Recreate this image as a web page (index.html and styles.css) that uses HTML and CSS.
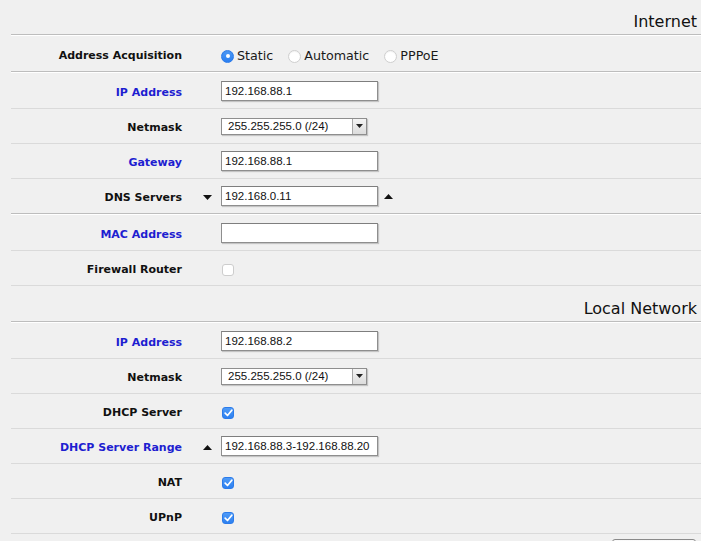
FILE: index.html
```html
<!DOCTYPE html>
<html>
<head>
<meta charset="utf-8">
<link rel="stylesheet" href="styles.css">
</head>
<body>
<div class="panel">
  <div class="heading end">Internet</div>

  <div class="row tall end">
    <div class="label">Address Acquisition</div>
    <div class="arrow-cell"></div>
    <div class="ctrl radios">
      <label class="radio-opt"><span class="radio on"></span>Static</label>
      <label class="radio-opt"><span class="radio"></span>Automatic</label>
      <label class="radio-opt"><span class="radio"></span>PPPoE</label>
    </div>
  </div>

  <div class="row tall">
    <div class="label blue">IP Address</div>
    <div class="arrow-cell"></div>
    <div class="ctrl"><div class="input">192.168.88.1</div></div>
  </div>

  <div class="row">
    <div class="label">Netmask</div>
    <div class="arrow-cell"></div>
    <div class="ctrl"><div class="select"><span class="sel-value">255.255.255.0 (/24)</span><span class="sel-btn"><svg width="7" height="4" viewBox="0 0 7 4"><polygon points="0,0 7,0 3.5,4" fill="#222"/></svg></span></div></div>
  </div>

  <div class="row">
    <div class="label blue">Gateway</div>
    <div class="arrow-cell"></div>
    <div class="ctrl"><div class="input">192.168.88.1</div></div>
  </div>

  <div class="row end">
    <div class="label">DNS Servers</div>
    <div class="arrow-cell"><svg class="tri" width="9" height="5" viewBox="0 0 9 5"><polygon points="0,0 9,0 4.5,5" fill="#111"/></svg></div>
    <div class="ctrl"><div class="input">192.168.0.11</div><svg class="tri" width="9" height="5" viewBox="0 0 9 5"><polygon points="0,5 9,5 4.5,0" fill="#111"/></svg></div>
  </div>

  <div class="row tall">
    <div class="label blue">MAC Address</div>
    <div class="arrow-cell"></div>
    <div class="ctrl"><div class="input"></div></div>
  </div>

  <div class="row">
    <div class="label">Firewall Router</div>
    <div class="arrow-cell"></div>
    <div class="ctrl"><span class="check"></span></div>
  </div>

  <div class="heading tall end">Local Network</div>

  <div class="row tall">
    <div class="label blue">IP Address</div>
    <div class="arrow-cell"></div>
    <div class="ctrl"><div class="input">192.168.88.2</div></div>
  </div>

  <div class="row">
    <div class="label">Netmask</div>
    <div class="arrow-cell"></div>
    <div class="ctrl"><div class="select"><span class="sel-value">255.255.255.0 (/24)</span><span class="sel-btn"><svg width="7" height="4" viewBox="0 0 7 4"><polygon points="0,0 7,0 3.5,4" fill="#222"/></svg></span></div></div>
  </div>

  <div class="row">
    <div class="label">DHCP Server</div>
    <div class="arrow-cell"></div>
    <div class="ctrl"><span class="check on"><svg width="9" height="8" viewBox="0 0 9 8"><polyline points="1.2,4.2 3.5,6.5 7.8,1.2" fill="none" stroke="#fff" stroke-width="1.7" stroke-linecap="round" stroke-linejoin="round"/></svg></span></div>
  </div>

  <div class="row">
    <div class="label blue">DHCP Server Range</div>
    <div class="arrow-cell"><svg class="tri" width="9" height="5" viewBox="0 0 9 5"><polygon points="0,5 9,5 4.5,0" fill="#111"/></svg></div>
    <div class="ctrl"><div class="input">192.168.88.3-192.168.88.20</div></div>
  </div>

  <div class="row">
    <div class="label">NAT</div>
    <div class="arrow-cell"></div>
    <div class="ctrl"><span class="check on"><svg width="9" height="8" viewBox="0 0 9 8"><polyline points="1.2,4.2 3.5,6.5 7.8,1.2" fill="none" stroke="#fff" stroke-width="1.7" stroke-linecap="round" stroke-linejoin="round"/></svg></span></div>
  </div>

  <div class="row">
    <div class="label">UPnP</div>
    <div class="arrow-cell"></div>
    <div class="ctrl"><span class="check on"><svg width="9" height="8" viewBox="0 0 9 8"><polyline points="1.2,4.2 3.5,6.5 7.8,1.2" fill="none" stroke="#fff" stroke-width="1.7" stroke-linecap="round" stroke-linejoin="round"/></svg></span></div>
  </div>

  <div class="footer"><button class="apply" aria-label="Apply"></button></div>
</div>
</body>
</html>
```

FILE: styles.css
```css
html, body {
  margin: 0;
  padding: 0;
  background: #f0f0f0;
}

body {
  font-family: "DejaVu Sans", Verdana, sans-serif;
  color: #111;
  overflow: hidden;
}

.panel {
  margin-left: 11px;
}

.heading {
  height: 34px;
  display: flex;
  flex-direction: column;
  align-items: flex-end;
  justify-content: flex-end;
  padding-right: 4px;
  font-size: 16px;
  line-height: 19px;
  color: #111;
  border-bottom: 1px solid #dadada;
}

.heading::after {
  content: "";
  display: block;
  height: 3px;
}

.heading.tall::after {
  height: 3px;
}

.row {
  height: 34px;
  display: grid;
  grid-template-columns: 171px 39px 1fr;
  align-items: center;
  border-bottom: 1px solid #dadada;
}

.tall {
  height: 35px;
}

.end {
  border-bottom-color: #bdbdbd;
  box-shadow: 0 1px 0 #ffffff;
  margin-bottom: 1px;
}

.label {
  text-align: right;
  font-weight: bold;
  font-size: 11px;
  color: #111;
  padding-top: 3px;
  white-space: nowrap;
}

.label.blue {
  color: #1e1ed0;
}

.arrow-cell {
  display: flex;
  justify-content: flex-end;
  padding-right: 9px;
  padding-top: 2px;
}

.tri {
  display: block;
}

.ctrl {
  display: flex;
  align-items: center;
  gap: 6px;
}

.input {
  width: 149px;
  height: 18px;
  background: #fff;
  border: 1px solid #8e8e8e;
  border-top-color: #7e7e7e;
  box-shadow: 1px 1px 1px rgba(0, 0, 0, 0.18);
  padding: 0 3px;
  font-family: "Liberation Sans", Arial, sans-serif;
  font-size: 11.5px;
  line-height: 18px;
  color: #111;
  white-space: nowrap;
  overflow: hidden;
}

.select {
  width: 144px;
  height: 15px;
  display: flex;
  background: #fff;
  border: 1px solid #8e8e8e;
  box-shadow: 1px 1px 1px rgba(0, 0, 0, 0.18);
  font-family: "Liberation Sans", Arial, sans-serif;
  font-size: 11.5px;
  line-height: 15px;
  color: #111;
}

.sel-value {
  flex: 1;
  padding-left: 6px;
  white-space: nowrap;
}

.sel-btn {
  width: 13px;
  display: flex;
  align-items: center;
  justify-content: center;
  background: linear-gradient(#f4f4f4, #dcdcdc);
  border-left: 1px solid #a8a8a8;
}

.sel-btn svg {
  display: block;
}

.radios {
  gap: 15px;
  padding-top: 4px;
}

.radio-opt {
  display: flex;
  align-items: center;
  gap: 3px;
  font-size: 12.7px;
  color: #1a1a1a;
}

.radio {
  width: 11px;
  height: 11px;
  border-radius: 50%;
  background: #fff;
  border: 1px solid #cfcfcf;
  box-shadow: inset 0 1px 1px rgba(0, 0, 0, 0.05);
  display: flex;
  align-items: center;
  justify-content: center;
  margin-top: 1px;
}

.radio.on {
  background: linear-gradient(#4d9af7, #2a7ef0);
  border-color: #2a7aea;
}

.radio.on::after {
  content: "";
  width: 4px;
  height: 4px;
  border-radius: 50%;
  background: #fff;
}

.check {
  width: 10px;
  height: 10px;
  margin-left: 1px;
  margin-top: 4px;
  border-radius: 3px;
  background: #fff;
  border: 1px solid #cdcdcd;
  display: flex;
  align-items: center;
  justify-content: center;
}

.check.on {
  background: linear-gradient(#4f9bf7, #2d80f0);
  border-color: #2b7bea;
}

.check svg {
  display: block;
}

.footer {
  display: flex;
  justify-content: flex-end;
  padding-top: 5px;
  padding-right: 5px;
}

.apply {
  width: 84px;
  height: 22px;
  background: linear-gradient(#fafafa, #e2e2e2);
  border: 1px solid #8a8a8a;
  border-radius: 3px;
}
```
